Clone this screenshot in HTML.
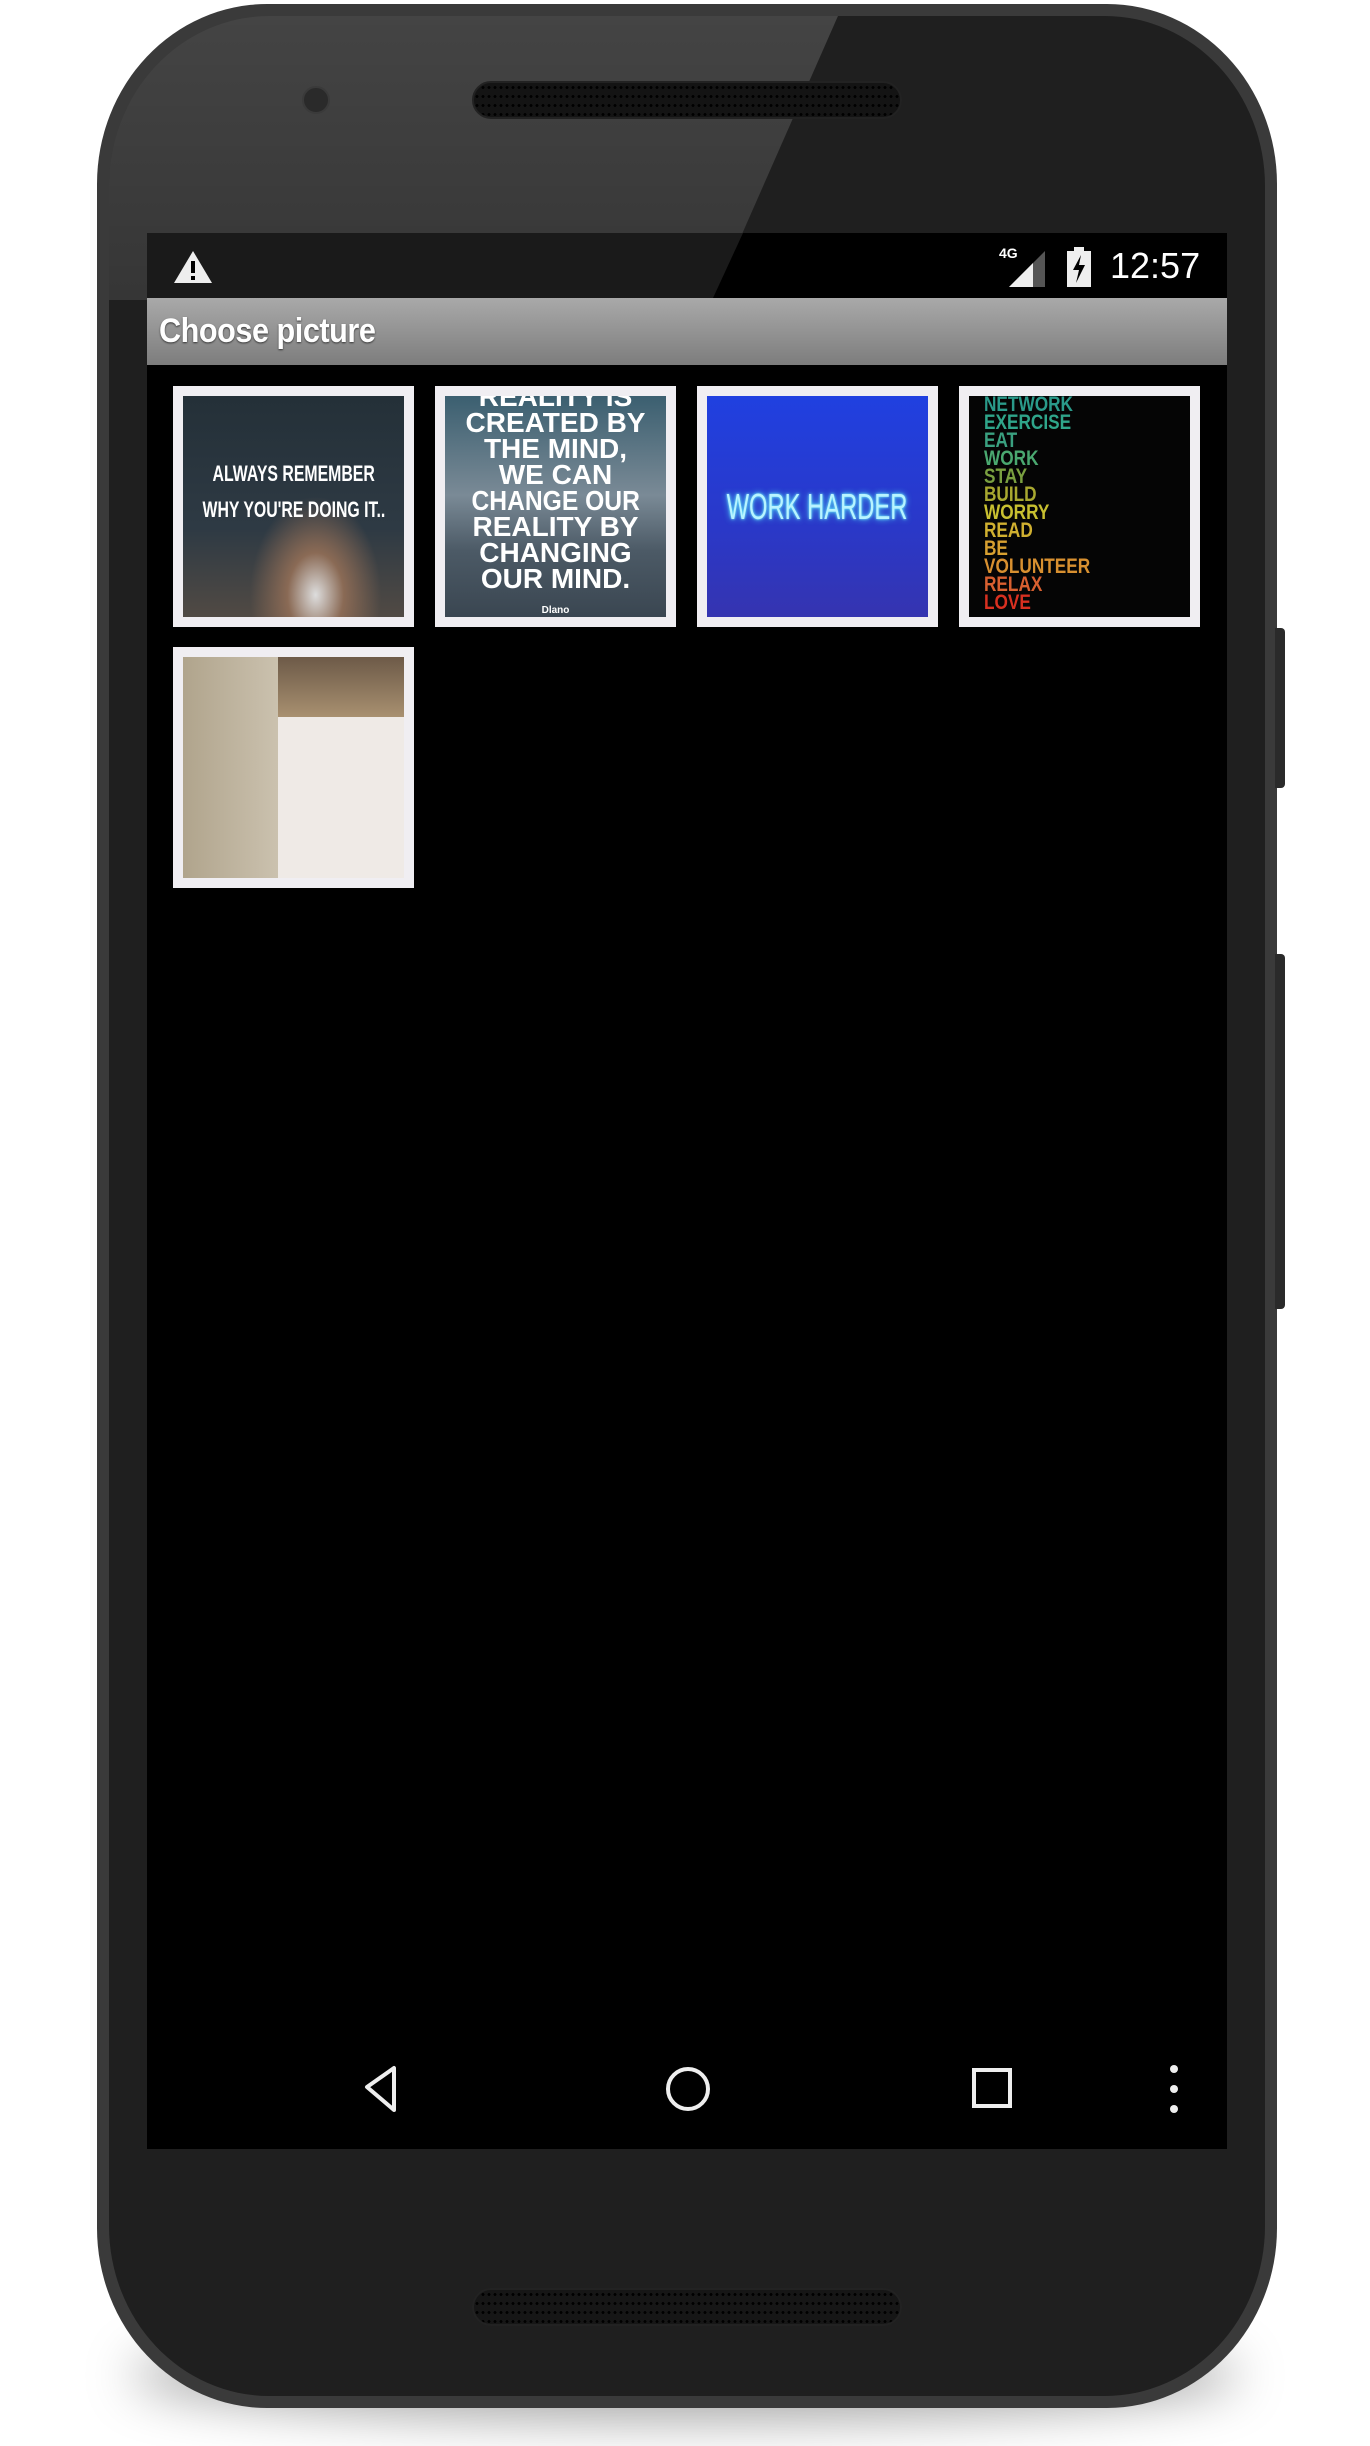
<!DOCTYPE html>
<html><head><meta charset="utf-8"><style>
*{margin:0;padding:0;box-sizing:border-box}
body{width:1370px;height:2446px;background:#fff;position:relative;overflow:hidden;font-family:"Liberation Sans",sans-serif}
.shadow{position:absolute;left:130px;top:2330px;width:1110px;height:90px;border-radius:50%;background:rgba(0,0,0,.35);filter:blur(25px)}
.phone{position:absolute;left:97px;top:4px;width:1180px;height:2404px;border-radius:170px/180px;background:#3a3a3a;}
.body{position:absolute;width:1156px;height:2380px;border-radius:160px/170px;background:#1f1f1f;overflow:hidden}
.glare{position:absolute;left:0;top:0;width:1370px;height:300px;background:linear-gradient(180deg,rgba(255,255,255,.17),rgba(255,255,255,.1));clip-path:polygon(0 0,845px 0,713px 300px,0 300px)}
.btn{position:absolute;left:1275px;width:10px;background:#2a2a2a;border-radius:0 4px 4px 0}
.screen{position:absolute;left:147px;top:233px;width:1080px;height:1916px;background:#000}
.status{position:absolute;left:0;top:0;width:1080px;height:65px;background:#000}
.title{position:absolute;left:0;top:65px;width:1080px;height:67px;background:linear-gradient(#a9a9a9,#7d7d7d);color:#fff;font-weight:bold;font-size:34px;line-height:67px;padding-left:12px;text-shadow:0 1px 2px #333;letter-spacing:-.5px}
.tile{position:absolute;width:241px;height:241px;background:#f0eef2;padding:10px}
.img{width:100%;height:100%;overflow:hidden;position:relative;color:#fff;text-align:center;font-weight:bold}
.ln{display:flex;justify-content:center;white-space:nowrap;margin:0 -60px}
.ln span{display:inline-block}
.spk{position:absolute;left:472px;width:430px;height:38px;border-radius:19px;background:#141414;background-image:radial-gradient(circle,#000 1.3px,transparent 1.6px);background-size:6px 9px;border:2px solid #222}
</style></head><body>
<div class="shadow"></div>
<div class="phone"></div>
<div class="btn" style="top:628px;height:160px"></div>
<div class="btn" style="top:954px;height:355px"></div>
<div class="body" style="left:109px;top:16px"><div class="glare" style="left:-109px;top:-16px"></div></div>
<div class="spk" style="top:81px"></div>
<div class="spk" style="top:2288px;background-color:#161616"></div>
<div style="position:absolute;left:302px;top:86px;width:28px;height:28px;border-radius:50%;background:#2a2a2a;border:2px solid #3a3a3a"></div>
<div class="screen">
 <div class="status">
  <div style="position:absolute;left:0;top:0;width:1080px;height:65px;background:#1a1a1a;clip-path:polygon(0 0,596px 0,566px 65px,0 65px)"></div>
  <svg style="position:absolute;left:26px;top:17px" width="40" height="34" viewBox="0 0 40 34"><path d="M20 1 L39 33 L1 33 Z" fill="#eee"/><rect x="18" y="11" width="4" height="12" fill="#000"/><rect x="18" y="26" width="4" height="4" fill="#000"/></svg>
  <div style="position:absolute;left:852px;top:12px;color:#fff;font-size:14px;font-weight:bold">4G</div>
  <svg style="position:absolute;left:862px;top:18px" width="36" height="36" viewBox="0 0 36 36"><path d="M36 0 L36 36 L0 36 Z" fill="#555"/><path d="M24 12 L24 36 L0 36 Z" fill="#eee"/></svg>
  <svg style="position:absolute;left:920px;top:14px" width="24" height="40" viewBox="0 0 24 40"><rect x="7" y="0" width="10" height="4" fill="#eee"/><rect x="0" y="4" width="24" height="36" fill="#eee"/><path d="M14 8 L6 23 L12 23 L9 36 L18 18 L12 18 Z" fill="#000"/></svg>
  <div style="position:absolute;left:963px;top:12px;color:#fff;font-size:36px">12:57</div>
 </div>
 <div class="title"><span style="display:inline-block;transform:scaleX(.9);transform-origin:left">Choose picture</span></div>
 <div class="tile" style="left:26px;top:153px"><div class="img" style="background:radial-gradient(ellipse at 60% 90%,#ddd 0,#8a6a55 15%,transparent 35%),linear-gradient(#243038,#2e3a44 60%,#514a44);font-size:22px;line-height:36px;padding-top:60px"><div class="ln"><span style="transform:scaleX(.72)">ALWAYS REMEMBER</span></div><div class="ln"><span style="transform:scaleX(.72)">WHY YOU'RE DOING IT..</span></div></div></div>
 <div class="tile" style="left:288px;top:153px"><div class="img" style="background:linear-gradient(#3b5f70,#7a8a96 45%,#4c5a66 70%,#3a4651);font-size:28px;line-height:26px">
 <div style="margin-top:-12px">REALITY IS<br>CREATED BY<br>THE MIND,<br>WE CAN<div class="ln"><span style="transform:scaleX(.88)">CHANGE OUR</span></div>REALITY BY<br>CHANGING<br>OUR MIND.</div><div style="font-size:10px;margin-top:6px">Dlano</div></div></div>
 <div class="tile" style="left:550px;top:153px"><div class="img" style="background:linear-gradient(#2040e0,#2a38c8 60%,#3534b0);font-weight:normal;font-size:36px;color:#b8f4ff;text-shadow:0 0 8px #5ef,0 0 3px #8ff;padding-top:90px"><div class="ln"><span style="transform:scaleX(.66)">WORK HARDER</span></div></div></div>
 <div class="tile" style="left:812px;top:153px"><div class="img" style="background:#050505;text-align:left;font-size:21px;line-height:18px;padding-left:15px">
 <div style="transform:scaleX(.82);transform-origin:left">
 <div style="color:#2a9a8a">NETWORK</div><div style="color:#2fa58a">EXERCISE</div><div style="color:#3aa080">EAT</div><div style="color:#4aa870">WORK</div><div style="color:#7aa040">STAY</div><div style="color:#a8a830">BUILD</div><div style="color:#c8c030">WORRY</div><div style="color:#d0b030">READ</div><div style="color:#d8a030">BE</div><div style="color:#d89030">VOLUNTEER</div><div style="color:#d86030">RELAX</div><div style="color:#d83020">LOVE</div></div></div></div>
 <div class="tile" style="left:26px;top:414px"><div class="img" style="background:linear-gradient(90deg,#b0a48c,#cfc6b4 50%,#e8e4dc 60%,#ddd6cb)"><div style="position:absolute;left:95px;top:0;width:130px;height:60px;background:linear-gradient(#6d5a48,#a89070)"></div><div style="position:absolute;left:95px;top:60px;width:130px;height:170px;background:#efeae6"></div></div></div>
 <svg style="position:absolute;left:215px;top:1832px" width="36" height="48" viewBox="0 0 36 48"><path d="M32 3 L32 45 L5 22 Z" fill="none" stroke="#eee" stroke-width="4" stroke-linejoin="round"/></svg>
 <svg style="position:absolute;left:517px;top:1832px" width="48" height="48"><circle cx="24" cy="24" r="20" fill="none" stroke="#eee" stroke-width="4"/></svg>
 <svg style="position:absolute;left:825px;top:1835px" width="40" height="40"><rect x="2" y="2" width="36" height="36" fill="none" stroke="#eee" stroke-width="4"/></svg>
 <svg style="position:absolute;left:1021px;top:1830px" width="12" height="52"><circle cx="6" cy="6" r="4" fill="#eee"/><circle cx="6" cy="26" r="4" fill="#eee"/><circle cx="6" cy="46" r="4" fill="#eee"/></svg>
</div>
</body></html>
